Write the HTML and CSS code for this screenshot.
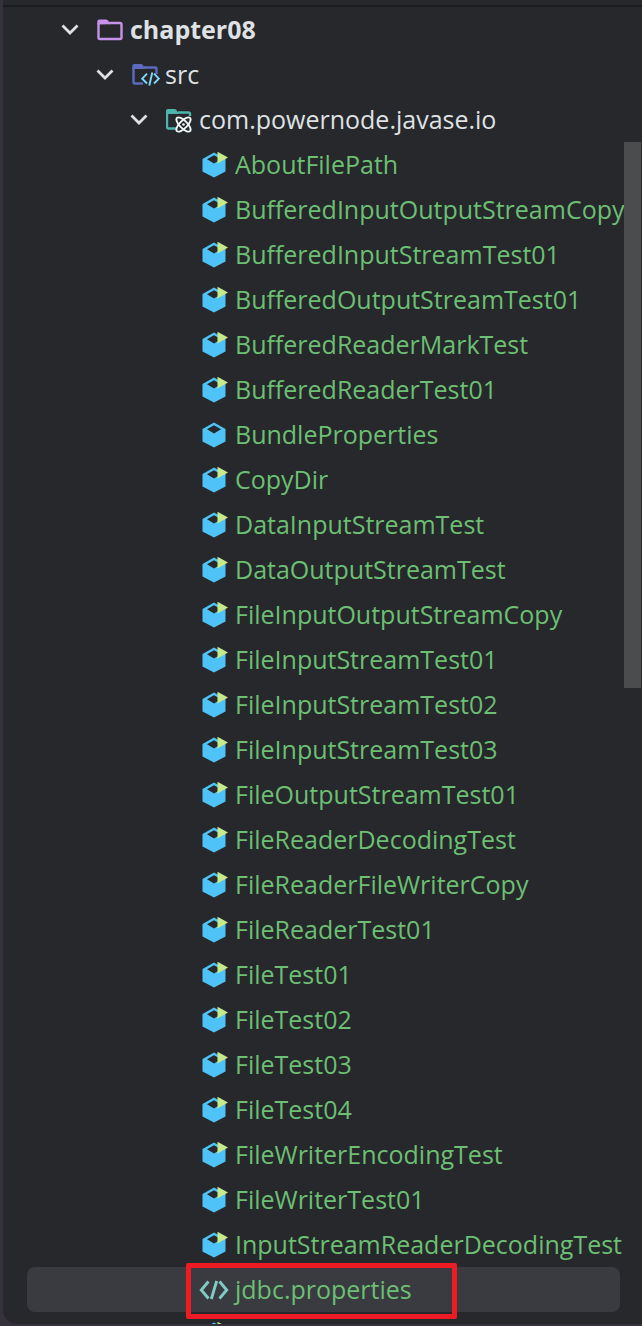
FILE: index.html
```html
<!DOCTYPE html>
<html lang="en">

<head>
    <meta charset="UTF-8">
    <meta name="viewport" content="width=device-width, initial-scale=1.0">
    <title>chapter08</title>
    <link rel="stylesheet" href="styles.css">
</head>

<body>
    <svg class="sprite" aria-hidden="true">
        <symbol id="chevron" viewBox="0 0 20 20">
            <path d="M2.500 5.500 10 13l7.500-7.500" fill="none" stroke="#dfe1e5" stroke-width="2.800"/>
        </symbol>
        <symbol id="folder" viewBox="0 0 28 28">
            <path d="M1.500 7V21.500q0 1.500 1.500 1.500H23q1.500 0 1.500-1.500V8.500q0-1.500-1.500-1.500H12" fill="none" stroke="currentColor" stroke-width="2.400"/>
            <path d="M.3 8.500V5.500q0-2 2-2H9q1 0 1.700.8L13 7.200v1z" fill="currentColor"/>
        </symbol>
        <symbol id="folder-src" viewBox="0 0 28 28">
            <path d="M11 22.500H3Q1.500 22.500 1.500 21V6M12 6.500H23q1.500 0 1.500 1.500v5" fill="none" stroke="#5c6bc0" stroke-width="2.400"/>
            <path d="M.3 8V5q0-2 2-2H9q1 0 1.700.8L13 7.200V8z" fill="#5c6bc0"/>
            <path d="m15 12.700-4.800 5L15 22.500M22 12.700l4.800 5-4.800 4.800M20.300 11.500l-3 13" fill="none" stroke="#80d8ff" stroke-width="1.900"/>
        </symbol>
        <symbol id="folder-package" viewBox="0 0 28 28">
            <path d="M10 22.500H2.500Q1 22.500 1 21V6M12 6.500H22.500Q24 6.500 24 8v2" fill="none" stroke="#4db6ac" stroke-width="2.400"/>
            <path d="M0 8V5q0-2 2-2H8.500q1 0 1.700.8L12.500 7.200V8z" fill="#4db6ac"/>
            <g fill="none" stroke="#eefaf8" stroke-width="1.900">
                <ellipse cx="17.500" cy="18.500" rx="3.800" ry="9.300" transform="rotate(45 17.500 18.500)"/>
                <ellipse cx="17.500" cy="18.500" rx="3.800" ry="9.300" transform="rotate(-45 17.500 18.500)"/>
            </g>
            <circle cx="17.500" cy="18.500" r="1.300" fill="#eefaf8"/>
        </symbol>
        <symbol id="class" viewBox="0 0 28 28">
            <path d="M12 1.500 23.500 8v12.500L12 26.500.5 20.500V8z" fill="#4fc3f7"/>
            <path d="m12 4.300 7 4L12 12.500 5 8.300z" fill="#26282b"/>
        </symbol>
        <symbol id="class-run" viewBox="0 0 28 28">
            <use href="#class"/>
            <path d="M15.500.7 26 6.500l-10.500 6z" fill="#c5e98b"/>
        </symbol>
        <symbol id="properties" viewBox="0 0 30 28">
            <path d="M9.500 5.500 2.300 14l7.200 8.500M20.500 5.500l7.200 8.500-7.200 8.500M17.700 5l-5.400 18" fill="none" stroke="#80cbc4" stroke-width="2.900"/>
        </symbol>
    </svg>

    <header class="toolbar"></header>
    <main class="panel">
        <ul class="tree">
            <li class="row level-1">
                <button class="toggle" aria-label="Collapse chapter08"><svg><use href="#chevron"/></svg></button>
                <svg class="icon module"><use href="#folder"/></svg>
                <span class="name">chapter08</span>
            </li>
            <li class="row level-2">
                <button class="toggle" aria-label="Collapse src"><svg><use href="#chevron"/></svg></button>
                <svg class="icon"><use href="#folder-src"/></svg>
                <span class="name">src</span>
            </li>
            <li class="row level-3">
                <button class="toggle" aria-label="Collapse com.powernode.javase.io"><svg><use href="#chevron"/></svg></button>
                <svg class="icon"><use href="#folder-package"/></svg>
                <span class="name">com.powernode.javase.io</span>
            </li>
            <li class="row file"><svg class="icon"><use href="#class-run"/></svg><span class="name">AboutFilePath</span></li>
            <li class="row file"><svg class="icon"><use href="#class-run"/></svg><span class="name">BufferedInputOutputStreamCopy</span></li>
            <li class="row file"><svg class="icon"><use href="#class-run"/></svg><span class="name">BufferedInputStreamTest01</span></li>
            <li class="row file"><svg class="icon"><use href="#class-run"/></svg><span class="name">BufferedOutputStreamTest01</span></li>
            <li class="row file"><svg class="icon"><use href="#class-run"/></svg><span class="name">BufferedReaderMarkTest</span></li>
            <li class="row file"><svg class="icon"><use href="#class-run"/></svg><span class="name">BufferedReaderTest01</span></li>
            <li class="row file"><svg class="icon"><use href="#class"/></svg><span class="name">BundleProperties</span></li>
            <li class="row file"><svg class="icon"><use href="#class-run"/></svg><span class="name">CopyDir</span></li>
            <li class="row file"><svg class="icon"><use href="#class-run"/></svg><span class="name">DataInputStreamTest</span></li>
            <li class="row file"><svg class="icon"><use href="#class-run"/></svg><span class="name">DataOutputStreamTest</span></li>
            <li class="row file"><svg class="icon"><use href="#class-run"/></svg><span class="name">FileInputOutputStreamCopy</span></li>
            <li class="row file"><svg class="icon"><use href="#class-run"/></svg><span class="name">FileInputStreamTest01</span></li>
            <li class="row file"><svg class="icon"><use href="#class-run"/></svg><span class="name">FileInputStreamTest02</span></li>
            <li class="row file"><svg class="icon"><use href="#class-run"/></svg><span class="name">FileInputStreamTest03</span></li>
            <li class="row file"><svg class="icon"><use href="#class-run"/></svg><span class="name">FileOutputStreamTest01</span></li>
            <li class="row file"><svg class="icon"><use href="#class-run"/></svg><span class="name">FileReaderDecodingTest</span></li>
            <li class="row file"><svg class="icon"><use href="#class-run"/></svg><span class="name">FileReaderFileWriterCopy</span></li>
            <li class="row file"><svg class="icon"><use href="#class-run"/></svg><span class="name">FileReaderTest01</span></li>
            <li class="row file"><svg class="icon"><use href="#class-run"/></svg><span class="name">FileTest01</span></li>
            <li class="row file"><svg class="icon"><use href="#class-run"/></svg><span class="name">FileTest02</span></li>
            <li class="row file"><svg class="icon"><use href="#class-run"/></svg><span class="name">FileTest03</span></li>
            <li class="row file"><svg class="icon"><use href="#class-run"/></svg><span class="name">FileTest04</span></li>
            <li class="row file"><svg class="icon"><use href="#class-run"/></svg><span class="name">FileWriterEncodingTest</span></li>
            <li class="row file"><svg class="icon"><use href="#class-run"/></svg><span class="name">FileWriterTest01</span></li>
            <li class="row file"><svg class="icon"><use href="#class-run"/></svg><span class="name">InputStreamReaderDecodingTest</span></li>
            <li class="row file selected">
                <svg class="icon wide"><use href="#properties"/></svg><span class="name">jdbc.properties</span>
                <div class="marker"></div>
            </li>
            <li class="row file"><svg class="icon"><use href="#class-run"/></svg></li>
        </ul>
        <div class="scrollbar"></div>
    </main>
</body>

</html>
```
FILE: styles.css
```css
* {
    box-sizing: border-box;
}
body {
    margin: 0;
    height: 100vh;
    display: flex;
    flex-direction: column;
    padding: 0 0 2px 3px;
    background-color: #35323b;
    font-family: "Open Sans", sans-serif;
    font-size: 25px;
    color: #dfe1e5;
}
.sprite {
    display: none;
}
.toolbar {
    flex: none;
    height: 7px;
    background-color: #26282b;
    border-bottom: 2px solid #1b1c1e;
}
.panel {
    position: relative;
    flex: 1;
    min-height: 0;
    overflow: hidden;
    background-color: #26282b;
    border-bottom-left-radius: 14px;
}
.tree {
    list-style: none;
    margin: 0 22px 0 24px;
    padding: 0;
}
.row {
    position: relative;
    display: flex;
    align-items: center;
    height: 45px;
    white-space: nowrap;
}
.level-1 {
    padding-left: 33px;
    font-weight: bold;
}
.level-2 {
    padding-left: 68px;
}
.level-3 {
    padding-left: 102px;
}
.file {
    padding-left: 175px;
    color: #6cbf73;
}
.name {
    padding-bottom: 2px;
}
.toggle {
    width: 20px;
    height: 20px;
    margin-right: 17px;
    padding: 0;
    border: none;
    background: none;
    cursor: pointer;
}
.toggle svg {
    display: block;
    width: 20px;
    height: 20px;
}
.icon {
    flex: none;
    width: 28px;
    height: 28px;
    margin-right: 5px;
}
.module {
    color: #c792ea;
}
.wide {
    width: 30px;
    margin-left: -3px;
    margin-right: 6px;
}
.selected {
    background-color: #393b40;
    border-radius: 8px;
}
.marker {
    position: absolute;
    top: -4px;
    bottom: -7px;
    left: 159px;
    width: 271px;
    border: 5px solid #ed1c24;
    border-radius: 2px;
}
.scrollbar {
    position: absolute;
    top: 135px;
    right: 1px;
    width: 17px;
    height: 546px;
    background-color: #4b4c4e;
}
```
